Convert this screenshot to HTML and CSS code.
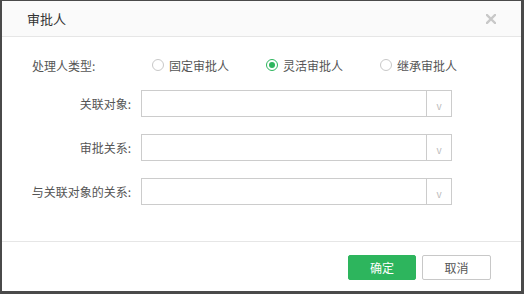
FILE: index.html
```html
<!DOCTYPE html>
<html lang="zh-CN">
<head>
    <meta charset="UTF-8">
    <title>审批人</title>
    <link rel="stylesheet" href="styles.css">
</head>
<body>
    <div class="dialog">
        <header class="dialog-header">
            <span class="dialog-title">审批人</span>
            <svg class="close-btn" width="10" height="10" viewBox="0 0 10 10">
                <path d="M1 1L9 9M9 1L1 9" stroke="#c8c8c8" stroke-width="2.4" stroke-linecap="square"/>
            </svg>
        </header>

        <div class="dialog-body">
            <div class="type-row">
                <span class="type-label">处理人类型:</span>
                <label class="radio"><span class="radio-dot"></span>固定审批人</label>
                <label class="radio checked"><span class="radio-dot"></span>灵活审批人</label>
                <label class="radio"><span class="radio-dot"></span>继承审批人</label>
            </div>

            <div class="form-row">
                <span class="form-label">关联对象:</span>
                <div class="select"><span class="select-value"></span><span class="select-arrow">v</span></div>
            </div>
            <div class="form-row">
                <span class="form-label">审批关系:</span>
                <div class="select"><span class="select-value"></span><span class="select-arrow">v</span></div>
            </div>
            <div class="form-row">
                <span class="form-label">与关联对象的关系:</span>
                <div class="select"><span class="select-value"></span><span class="select-arrow">v</span></div>
            </div>
        </div>

        <footer class="dialog-footer">
            <button class="btn btn-primary">确定</button>
            <button class="btn btn-default">取消</button>
        </footer>
    </div>
</body>
</html>
```

FILE: styles.css
```css
* {
    margin: 0;
    padding: 0;
    box-sizing: border-box;
    font-family: "Noto Sans CJK SC", "Noto Sans", sans-serif;
}

body {
    background: #fff;
}

.dialog {
    width: 524px;
    height: 294px;
    background: #fff;
    border-style: solid;
    border-color: #4a4a4a;
    border-width: 1px 3px 3px 2px;
    display: flex;
    flex-direction: column;
}

.dialog-header {
    height: 36px;
    background: #fafafa;
    border-bottom: 1px solid #e6e6e6;
    display: flex;
    align-items: center;
    justify-content: space-between;
    padding: 0 25px 0 25px;
}

.dialog-title {
    font-size: 13px;
    color: #333;
}

.close-btn {
    margin-top: 1px;
}

.dialog-body {
    flex: 1;
    padding-top: 20px;
}

.type-row {
    display: flex;
    align-items: center;
    height: 16px;
    padding-left: 30px;
    font-size: 12px;
    color: #555;
    margin-bottom: 17px;
}

.type-label {
    width: 120px;
}

.radio {
    display: flex;
    align-items: center;
    width: 114px;
    color: #555;
}

.radio-dot {
    width: 12px;
    height: 12px;
    border: 1px solid #c8c8c8;
    border-radius: 50%;
    margin-right: 5px;
    display: flex;
    align-items: center;
    justify-content: center;
}

.radio.checked .radio-dot {
    border-color: #2db55d;
}

.radio.checked .radio-dot::after {
    content: "";
    width: 6px;
    height: 6px;
    border-radius: 50%;
    background: #2db55d;
}

.form-row {
    display: flex;
    align-items: center;
    margin-bottom: 17px;
}

.form-label {
    width: 129px;
    margin-right: 10px;
    text-align: right;
    font-size: 12px;
    color: #555;
}

.select {
    width: 311px;
    height: 27px;
    border: 1px solid #ccc;
    display: flex;
}

.select-value {
    flex: 1;
}

.select-arrow {
    width: 25px;
    border-left: 1px solid #ccc;
    font-size: 10px;
    color: #bbb;
    display: flex;
    align-items: center;
    justify-content: center;
    padding-top: 3px;
}

.dialog-footer {
    height: 50px;
    border-top: 1px solid #e6e6e6;
    display: flex;
    justify-content: flex-end;
    gap: 6px;
    padding: 13px 30px 0 0;
}

.btn {
    height: 25px;
    font-size: 12px;
    border-radius: 2px;
    cursor: pointer;
}

.btn-primary {
    width: 68px;
    background: #2db55d;
    border: 1px solid #2db55d;
    color: #fff;
}

.btn-default {
    width: 69px;
    background: #fff;
    border: 1px solid #c8c8c8;
    color: #555;
}
```
